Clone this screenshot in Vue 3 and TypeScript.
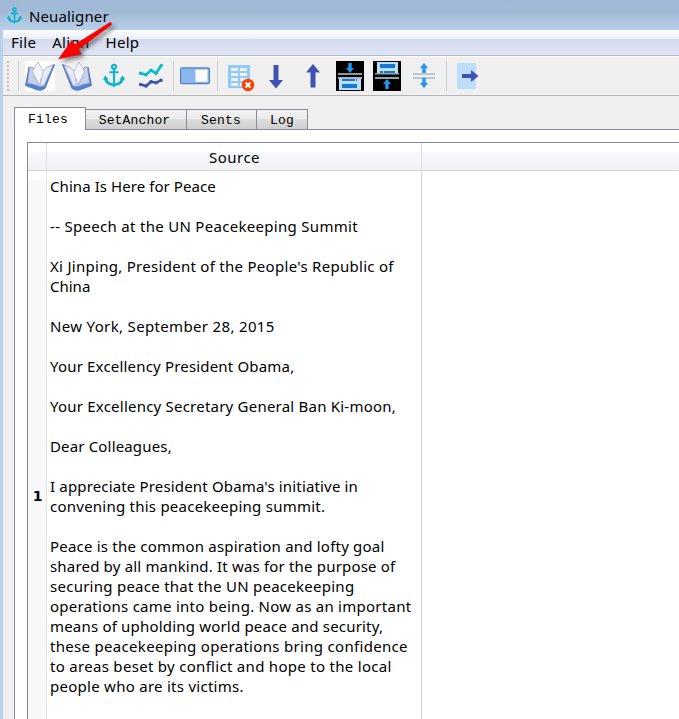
<script setup lang="ts">
interface Tab { label: string; width: number; active?: boolean }
type Line = [text: string, spacing?: number]

const menus = ['File', 'Align', 'Help']
const tabs: Tab[] = [
  { label: 'Files', width: 72, active: true },
  { label: 'SetAnchor', width: 101 },
  { label: 'Sents', width: 70 },
  { label: 'Log', width: 51 },
]
const lines: Line[] = [
  ['China Is Here for Peace', 0.07], [''],
  ['-- Speech at the UN Peacekeeping Summit', 0.3], [''],
  ["Xi Jinping, President of the People's Republic of", 0.285], ['China'], [''],
  ['New York, September 28, 2015', 0.34], [''],
  ['Your Excellency President Obama,', 0.18], [''],
  ['Your Excellency Secretary General Ban Ki-moon,', 0.22], [''],
  ['Dear Colleagues,', 0.16], [''],
  ["I appreciate President Obama's initiative in", 0.16],
  ['convening this peacekeeping summit.', 0.24], [''],
  ['Peace is the common aspiration and lofty goal', 0.21],
  ['shared by all mankind. It was for the purpose of', 0.18],
  ['securing peace that the UN peacekeeping', 0.26],
  ['operations came into being. Now as an important', 0.26],
  ['means of upholding world peace and security,', 0.19],
  ['these peacekeeping operations bring confidence', 0.31],
  ['to areas beset by conflict and hope to the local', 0.3],
  ['people who are its victims.', 0.27],
]
</script>

<template>
  <div class="window">
    <header class="title">
      <svg class="title-icon" viewBox="0 0 24 26"><g fill="none" stroke="#08b4d0" stroke-width="2.6"><circle cx="12" cy="3.500" r="2.600" /><path d="M12 6V24M6.500 9.500H17.500" /></g><path d="M0 17L2.500 13 6 17 4.800 17Q6 21 10.500 21.500L12 22.500L13.500 21.500Q18 21 19.200 17L18 17L21.500 13L24 17L22.500 18Q21 23 15.500 23.800Q13 24 12 26Q11 24 8.500 23.800Q3 23 1.500 18z" fill="#08b4d0" /></svg>
      <span>Neualigner</span>
    </header>
    <div class="frame">
      <nav class="menu"><span v-for="m in menus" :key="m">{{ m }}</span></nav>
      <div class="toolbar">
        <i class="grip"></i><i class="sep first"></i>
        <svg class="book lit" viewBox="0 0 30 30"><use href="#book" /></svg>
        <svg class="book flip" viewBox="0 0 30 30">
          <defs>
            <linearGradient id="page" x1="0" y1="0" x2="1" y2="1"><stop stop-color="#fff" /><stop offset="1" stop-color="#c5cde8" /></linearGradient>
            <g id="book">
              <path d="M4 6L.5 24.500L12.500 29L16 29.300L20 27.500L29.600 3.500L26 5L17 24L5 20z" fill="#4a84d8" stroke="#4a70b4" stroke-width=".8" stroke-linejoin="round" />
              <path d="M4.500 6Q6.500 5.500 8.500 7L14.500 26Q9 22.500 2.300 22.500z" fill="#c9d0ea" stroke="#7885b4" stroke-width=".7" />
              <path d="M14.500 26L17.500 10.500Q22 5 28.300 4L19 25Q16.500 24.500 14.500 26z" fill="url(#page)" stroke="#8b94c2" stroke-width=".7" />
              <path d="M14.500 25L7.500 10.500L13 1L18.300 11z" fill="#f5f6fc" stroke="#a3a9ca" stroke-width=".7" />
              <path d="M8.500 15L14.500 25L16 17" fill="none" stroke="#b4bbdc" stroke-width="1" />
            </g>
          </defs>
          <use href="#book" />
        </svg>
        <svg class="anchor" viewBox="0 0 24 26"><g fill="none" stroke="#08b4d0" stroke-width="2.200"><circle cx="12" cy="3.500" r="2.300" /><path d="M12 6V23M7 9.500H17" /></g><path d="M0 17L2.500 13 6 17 4.800 17Q6 21 10.500 21.500L12 22.500L13.500 21.500Q18 21 19.200 17L18 17L21.500 13L24 17L22.500 18Q21 23 15.500 23.800Q13 24 12 26Q11 24 8.500 23.800Q3 23 1.500 18z" fill="#08b4d0" /></svg>
        <svg class="chart" viewBox="0 0 24 24"><g fill="none" stroke-width="2.500"><path d="M1.700 9.300L7 10.700 12 6.300 17 9.300 22.300 1.500" stroke="#00bcd4" /><path d="M1.700 20.500L7 22 12 17.700 17 18.700 22 16.300" stroke="#3f51b5" /></g><g fill="#00bcd4"><circle cx="1.700" cy="9.300" r="1.800" /><circle cx="7" cy="10.700" r="1.800" /><circle cx="12" cy="6.300" r="1.800" /><circle cx="17" cy="9.300" r="1.800" /><circle cx="22.300" cy="1.500" r="1.800" /></g><g fill="#3f51b5"><circle cx="1.700" cy="20.500" r="1.800" /><circle cx="7" cy="22" r="1.800" /><circle cx="12" cy="17.700" r="1.800" /><circle cx="17" cy="18.700" r="1.800" /><circle cx="22" cy="16.300" r="1.800" /></g></svg>
        <i class="sep s2"></i>
        <svg class="toggle" viewBox="0 0 30 18"><rect x=".6" y=".9" width="28.800" height="15.800" rx="1.500" fill="#8bb6f0" stroke="#5580bd" stroke-width="1.200" /><rect x="15.500" y="2.700" width="12" height="12" fill="#fff" /></svg>
        <i class="sep s3"></i>
        <svg class="grid" viewBox="0 0 27 27"><path d="M0 0H22V23H0z" fill="#90caf9" /><g fill="#f0f0f0"><path d="M3 3h7v3H3zM12 3h7v3h-7zM3 8h7v3H3zM12 8h7v3h-7zM3 13h7v3H3zM12 13h7v3h-7zM3 18h7v3H3zM12 18h7v3h-7z" /></g><circle cx="20" cy="20" r="6.200" fill="#ff3d00" /><path d="M17.500 17.500l5 5m0-5l-5 5" stroke="#fff" stroke-width="2" /></svg>
        <svg class="down" viewBox="0 0 14 24"><path d="M4.500 0h5v15H14L7 23.500 0 15h4.500z" fill="#3f51b5" /></svg>
        <svg class="up" viewBox="0 0 14 24"><path d="M4.500 23.500h5v-15H14L7 0 0 8.500h4.500z" fill="#3f51b5" /></svg>
        <svg class="merge m1" viewBox="0 0 28 30"><path d="M0 0h28v30H0z" fill="#000" /><path d="M12.300 2h3.400v5H18l-4 5-4-5h2.300z" fill="#2196f3" /><path d="M2 12h24v2H2z" fill="#84979c" /><path d="M3 17h22v12H3z" fill="#bbdefb" /><path d="M2 16h24v2H2z" fill="#a7b8bf" /><path d="M6 18h13v2H6zM20 18h1v2h-1zM6 23h15v4H6z" fill="#1976d2" /></svg>
        <svg class="merge m2" viewBox="0 0 28 30"><path d="M0 0h28v30H0z" fill="#000" /><path d="M4 1h21v11H4z" fill="#bbdefb" /><path d="M7 3h15v4H7zM7 10h3v2H7zM11 10h11v2H11z" fill="#1976d2" /><path d="M2 12h24v1.500H2zM2 16h24v2H2z" fill="#90a4ae" /><path d="M12.300 28h3.400v-5H18l-4-5-4 5h2.300z" fill="#2196f3" /></svg>
        <svg class="split" viewBox="0 0 24 26"><path d="M1 10h22v2H1zM1 14h22v2H1z" fill="#b8c7cd" /><path d="M10.300 10V5H8l4-5 4 5h-2.300v5zM10.300 15v5H8l4 5 4-5h-2.300v-5z" fill="#2196f3" /></svg>
        <i class="sep s4"></i>
        <svg class="exit" viewBox="0 0 22 26"><rect width="19" height="26" rx="1.500" fill="#bbdefb" /><path d="M5 11h9V7l7.500 6-7.500 6v-4H5z" fill="#3f51b5" /></svg>
      </div>
      <main>
        <div class="tabs">
          <div v-for="t in tabs" :key="t.label" class="tab" :class="{ active: t.active }" :style="{ width: t.width + 'px' }">{{ t.label }}</div>
          <div class="tabline"></div>
        </div>
        <div class="pane">
          <div class="table">
            <div class="head corner"></div><div class="head source">Source</div><div class="head rest"></div>
            <div class="rownum">1</div>
            <div class="cell"><div v-for="([text, spacing], i) in lines" :key="i" class="line" :style="{ letterSpacing: (spacing ?? 0) + 'px' }">{{ text }}</div></div>
            <div class="empty"></div>
          </div>
        </div>
      </main>
    </div>
    <svg class="pointer" viewBox="0 0 66 50"><path d="M59.500 7L24 29.500l-3-4L7.500 44l23-5-3-4.500L61 9.500z" fill="#333" opacity=".6" filter="blur(2px)" transform="translate(3 3)" /><path d="M59.500 7L24 29.500l-3-4.500L7.500 44l23-5-3-4.800L61 9.500z" fill="#f00" stroke="#c51c1c" stroke-width=".5" /></svg>
  </div>
</template>

<style>
body { overflow: hidden; }
</style>
<style scoped>
* { box-sizing: border-box; }
.window { position: relative; width: 679px; height: 719px; overflow: hidden; background: #b9d1ea; color: #000; font: 15px/20px "Noto Sans", "Open Sans", sans-serif; display: flex; flex-direction: column; }
svg { display: block; flex: none; overflow: visible; }
.title { height: 30px; flex: none; display: flex; align-items: center; padding: 1px 0 0 7px; gap: 7px; background: linear-gradient(#9eb8d5, #a1bad6 40%, #b8d0e9); letter-spacing: .13px; }
.title span { padding-top: 1px; }
.title-icon { width: 15px; height: 17px; }
.frame { flex: 1; margin-left: 3px; background: #f0f0f0; display: flex; flex-direction: column; min-height: 0; }
.menu { height: 27px; flex: none; display: flex; gap: 16px; padding: 2px 0 0 8px; border-bottom: 1px solid #fff; background: linear-gradient(#fff, #e8edf5 9px, #d4daed 9px, #e0e5f4 25px, #b1b6cf 25px); letter-spacing: .3px; }
.toolbar { height: 39px; flex: none; display: flex; align-items: flex-start; padding-top: 4px; border-bottom: 1px solid #b5b5b5; }
.grip { width: 2px; height: 30px; margin-left: 4px; background: repeating-linear-gradient(#bbb 0 2px, #f0f0f0 2px 4px); }
.sep { width: 1px; height: 30px; background: #cfcfcf; flex: none; }
.first { margin-left: 9px; }
.book { width: 30px; height: 30px; margin-left: 6px; }
.lit { background: #fff; }
.flip { transform: scaleX(-1); margin-left: 7px; }
.anchor { width: 22px; height: 25px; margin: 2px 0 0 11px; }
.chart { width: 24px; height: 24px; margin: 3px 0 0 14px; }
.s2 { margin-left: 10px; }
.toggle { width: 30px; height: 18px; margin: 6px 0 0 6px; }
.s3 { margin-left: 7px; }
.grid { width: 27px; height: 27px; margin: 4px 0 0 10px; }
.down, .up { width: 14px; height: 24px; margin: 4px 0 0 14px; }
.up { margin: 3px 0 0 23px; }
.merge { width: 28px; height: 30px; margin-left: 16px; }
.m2 { margin-left: 9px; }
.split { width: 24px; height: 26px; margin: 2px 0 0 11px; }
.s4 { margin-left: 10px; }
.exit { width: 22px; height: 26px; margin: 2px 0 0 10px; }
main { flex: 1; display: flex; flex-direction: column; padding: 11px 0 0 11px; min-height: 0; }
.tabs { display: flex; align-items: flex-end; height: 23px; flex: none; font: 13px/22px "Liberation Mono", monospace; letter-spacing: .15px; }
.tab { height: 21px; border: 1px solid #898c95; border-left-width: 0; text-align: center; background: linear-gradient(#f2f2f2, #ebebeb 48%, #ddd 50%, #cfcfcf); flex: none; padding-right: 3px; }
.tab:nth-child(3) { padding-right: 1px; }
.tab:nth-child(4) { padding-right: 0; }
.active { height: 23px; border-left-width: 1px; border-bottom: 0; background: #fff; padding-right: 4px; line-height: 24px; }
.tabline { flex: 1; border-bottom: 1px solid #828790; }
.pane { flex: 1; background: #fff; border-left: 1px solid #898c95; padding: 12px 0 0 12px; min-height: 0; }
.table { height: 100%; display: grid; grid-template-columns: 19px 375px 1fr; grid-template-rows: 28px 1fr; border: 1px solid #828790; border-right: 0; border-bottom: 0; }
.head { text-align: center; line-height: 28px; border-right: 1px solid #dedfe1; border-bottom: 1px solid #d5d5d5; background: linear-gradient(#fff 9px, #f7f8fa 9px, #f1f2f4); }
.source { letter-spacing: .5px; padding-left: 1px; }
.head.rest { border-right: 0; }
.rownum { background: linear-gradient(#fff 9px, #f7f8fa 9px); border-right: 1px solid #e5e6e8; font: 700 14px/20px "DejaVu Sans", sans-serif; text-align: center; padding: 315px 0 0 1px; }
.cell { border-right: 1px solid #d8d8d8; padding: 5px 0 0 3px; overflow: hidden; }
.line { height: 20px; white-space: pre; }
.pointer { position: absolute; left: 51px; top: 15px; width: 66px; height: 50px; }
</style>
